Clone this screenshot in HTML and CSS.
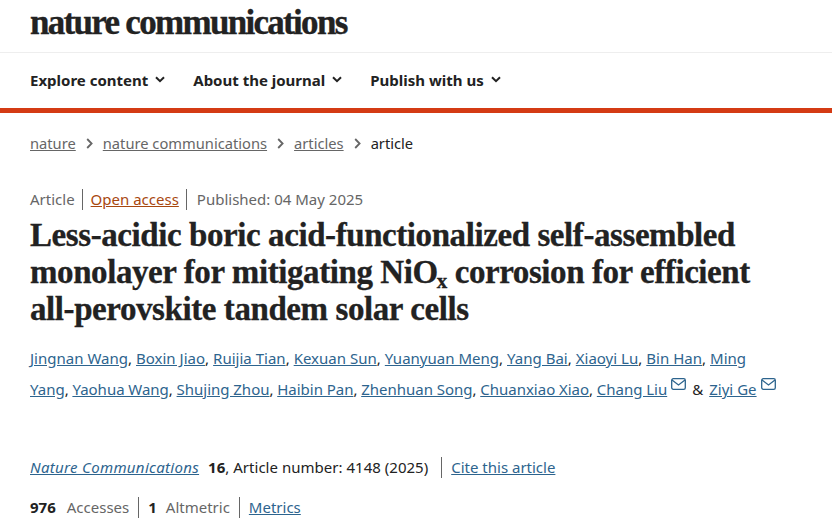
FILE: index.html
```html
<!DOCTYPE html>
<html lang="en">
<head>
<meta charset="utf-8">
<title>Less-acidic boric acid-functionalized self-assembled monolayer</title>
<link rel="stylesheet" href="styles.css">
</head>
<body>
<header class="masthead"><a class="logo">nature communications</a></header>
<nav class="nav">
  <a class="nav-item">Explore content <svg class="chev" viewBox="0 0 10 7"><path d="M1 1.2 5 5.2 9 1.2"/></svg></a>
  <a class="nav-item">About the journal <svg class="chev" viewBox="0 0 10 7"><path d="M1 1.2 5 5.2 9 1.2"/></svg></a>
  <a class="nav-item">Publish with us <svg class="chev" viewBox="0 0 10 7"><path d="M1 1.2 5 5.2 9 1.2"/></svg></a>
</nav>
<ol class="crumbs">
  <li><a>nature</a></li>
  <li class="sep"><svg viewBox="0 0 7 11"><path d="M1.2 1 5.6 5.5 1.2 10"/></svg></li>
  <li><a>nature communications</a></li>
  <li class="sep"><svg viewBox="0 0 7 11"><path d="M1.2 1 5.6 5.5 1.2 10"/></svg></li>
  <li><a>articles</a></li>
  <li class="sep"><svg viewBox="0 0 7 11"><path d="M1.2 1 5.6 5.5 1.2 10"/></svg></li>
  <li class="current">article</li>
</ol>
<main class="article">
  <ul class="meta">
    <li>Article</li>
    <li><a class="open">Open access</a></li>
    <li>Published: 04 May 2025</li>
  </ul>
  <h1 class="title">Less-acidic boric acid-functionalized self-assembled monolayer for mitigating NiO<sub>x</sub> corrosion for efficient all-perovskite tandem solar cells</h1>
  <p class="authors"><a>Jingnan Wang</a>, <a>Boxin Jiao</a>, <a>Ruijia Tian</a>, <a>Kexuan Sun</a>, <a>Yuanyuan Meng</a>, <a>Yang Bai</a>, <a>Xiaoyi Lu</a>, <a>Bin Han</a>, <a>Ming Yang</a><span class="tail">, <a>Yaohua Wang</a>, <a>Shujing Zhou</a>, <a>Haibin Pan</a>, <a>Zhenhuan Song</a>, <a>Chuanxiao Xiao</a>, <a>Chang Liu</a></span><svg class="mail" viewBox="0 0 15 12"><rect x="0.7" y="0.7" width="13.6" height="10.6" rx="1.6"/><path d="M1 2 7.5 7 14 2"/></svg> <span class="amp">&amp;</span> <a>Ziyi Ge</a><svg class="mail" viewBox="0 0 15 12"><rect x="0.7" y="0.7" width="13.6" height="10.6" rx="1.6"/><path d="M1 2 7.5 7 14 2"/></svg></p>
  <div class="citation">
    <span class="cite-main"><a class="journal">Nature Communications</a><b class="vol">16</b>, Article number: 4148 (2025)</span>
    <a class="cite-link">Cite this article</a>
  </div>
  <ul class="metrics">
    <li><b>976</b><span>Accesses</span></li>
    <li><b>1</b><span>Altmetric</span></li>
    <li><a>Metrics</a></li>
  </ul>
</main>
</body>
</html>
```
FILE: styles.css
```css
* { box-sizing: border-box; }
html, body { margin: 0; padding: 0; }
body { font-family: "Noto Sans", "Open Sans", sans-serif; font-size: 15px; color: #222; background: #fff; overflow: hidden; height: 530px; }
a { color: inherit; }
.masthead { height: 53px; padding: 4px 30px 0; border-bottom: 1px solid #eee; }
.logo { display: block; font-family: "Liberation Serif", serif; font-weight: 700; font-size: 35px; line-height: 38px; letter-spacing: -1.7px; -webkit-text-stroke: 0.35px #222; color: #222; }
.nav { height: 55px; padding: 0 30px 2px; display: flex; align-items: center; gap: 28px; }
.nav-item { display: flex; align-items: center; gap: 7px; font-weight: 700; font-size: 15px; color: #222; }
.chev { width: 10px; height: 7px; fill: none; stroke: #222; stroke-width: 2; }
.crumbs { list-style: none; margin: 0; padding: 18px 30px 0; border-top: 5px solid #d43b14; display: flex; align-items: center; height: 47px; font-size: 14.7px; color: #222; }
.crumbs a { color: #666; text-decoration: underline; }
.sep { display: flex; margin: 0 10px; }
.sep svg { width: 7px; height: 11px; fill: none; stroke: #666; stroke-width: 1.8; }
.article { padding: 0 30px; }
.meta { list-style: none; margin: 34px 0 0; padding: 0; display: flex; color: #666; height: 21px; line-height: 21px; font-size: 15px; }
.meta li + li { border-left: 1px solid #666; margin-left: 8px; padding-left: 8px; }
.meta li:nth-child(2) { margin-left: 7px; }
.meta li:last-child { padding-left: 10px; margin-left: 7px; }
.open { color: #a8470f; text-decoration: underline; }
.title { margin: 7px 0 0; font-family: "Liberation Serif", serif; font-weight: 700; font-size: 33px; line-height: 37px; letter-spacing: -0.42px; -webkit-text-stroke: 0.3px #222; color: #222; width: 735px; }
.title sub { font-size: 21px; line-height: 0; vertical-align: -5px; margin-left: -1px; }
.authors { margin: 15px 0 0; line-height: 31px; font-size: 15px; width: 750px; word-spacing: 0.1px; }
.tail { word-spacing: -0.2px; }
.amp { margin: 0 2px; }
.authors a, .journal, .cite-link, .metrics a { color: #2d648e; text-decoration: underline; }
.mail { width: 15px; height: 12px; margin-left: 4px; vertical-align: 5px; fill: none; stroke: #2d648e; stroke-width: 1.3; }
.citation { margin-top: 52px; display: flex; align-items: center; height: 21px; line-height: 21px; }
.journal { font-style: italic; margin-right: 9px; letter-spacing: 0.32px; }
.vol { font-weight: 700; }
.cite-main { padding-right: 13px; border-right: 1px solid #666; letter-spacing: 0.02px; }
.cite-link { margin-left: 9px; }
.metrics { list-style: none; margin: 19px 0 0; padding: 0; display: flex; height: 21px; line-height: 21px; }
.metrics li + li { border-left: 1px solid #666; margin-left: 9px; padding-left: 9px; }
.metrics b { font-weight: 700; margin-right: 11px; }
.metrics li:nth-child(2) b { margin-right: 9px; }
.metrics span { color: #666; }
```
